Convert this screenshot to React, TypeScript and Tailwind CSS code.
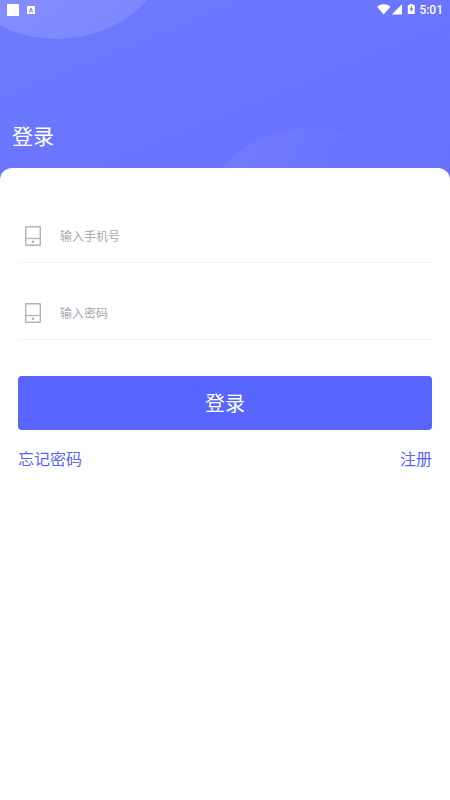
import React from 'react'

function HeaderBackground() {
    return (
        <svg
            className="absolute inset-0 h-full w-full"
            viewBox="0 0 450 184"
            preserveAspectRatio="none"
            aria-hidden="true"
        >
            <defs>
                <linearGradient id="base" x1="0" y1="0" x2="1" y2="1">
                    <stop offset="0" stopColor="#6e7aff" />
                    <stop offset="1" stopColor="#6870ff" />
                </linearGradient>
                <linearGradient id="topCircle" x1="0.2" y1="0.6" x2="0.9" y2="1">
                    <stop offset="0" stopColor="#fff" stopOpacity="0.16" />
                    <stop offset="1" stopColor="#fff" stopOpacity="0.11" />
                </linearGradient>
                <linearGradient id="bottomCircle" x1="0" y1="0.2" x2="0.75" y2="0.35">
                    <stop offset="0" stopColor="#fff" stopOpacity="0.06" />
                    <stop offset="1" stopColor="#fff" stopOpacity="0" />
                </linearGradient>
            </defs>
            <rect width="450" height="184" fill="url(#base)" />
            <circle cx="57" cy="-87" r="126" fill="url(#topCircle)" />
            <circle cx="309" cy="243" r="115" fill="url(#bottomCircle)" />
        </svg>
    )
}

function StatusBar() {
    return (
        <div className="flex h-5 items-center justify-between px-[7px] text-white">
            <div className="flex items-center gap-2">
                <span className="h-3 w-3 bg-white"></span>
                <svg className="h-2 w-2" viewBox="0 0 8 8" aria-hidden="true">
                    <rect width="8" height="8" rx="0.5" fill="#fff" />
                    <path d="M2.3 6.5 4 1.8 5.7 6.5M2.9 5h2.2" fill="none" stroke="#7c86ff" strokeWidth="1" />
                </svg>
            </div>
            <div className="flex items-center gap-0.5">
                <svg className="h-3 w-10" viewBox="0 0 40 12" fill="#fff" aria-hidden="true">
                    <path d="M0 2.8C3.6-.5 9.9-.5 13.5 2.8L6.7 10.4z" />
                    <path d="M25 .2v10.2H14.8z" />
                    <path d="M31.4.9h1.4V0h3v.9h1.4q.6 0 .6.6v7.8q0 .6-.6.6h-5.8q-.6 0-.6-.6V1.5q0-.6.6-.6z" />
                    <path d="M34.9 1.8 32.5 5.6h1.4v2.8l2.3-3.8h-1.3z" fill="#6f7aff" />
                </svg>
                <span className="font-[Roboto,sans-serif] text-xs font-medium leading-5">5:01</span>
            </div>
        </div>
    )
}

function FieldIcon() {
    return (
        <svg className="h-5 w-4 shrink-0" viewBox="0 0 16 20" fill="none" stroke="#b0b3bf" aria-hidden="true">
            <rect x="0.7" y="0.7" width="14.6" height="18.6" rx="0.5" strokeWidth="1.4" />
            <path d="M0.5 12.5h15" strokeWidth="1.3" />
            <circle cx="8" cy="15.8" r="1.3" fill="#b0b3bf" stroke="none" />
        </svg>
    )
}

function Field({ id, type, label }: { id: string; type: string; label: string }) {
    return (
        <div className="flex h-[54px] items-center border-b border-[#f3f3f5] pl-[7px]">
            <label htmlFor={id} aria-label={label}>
                <FieldIcon />
            </label>
            <input
                id={id}
                type={type}
                placeholder={label}
                className="ml-[19px] min-w-0 flex-1 bg-transparent text-xs text-gray-700 outline-none placeholder:text-[#a5a8b2]"
            />
        </div>
    )
}

export default function App() {
    return (
        <div className="min-h-screen bg-white font-['Noto_Sans_CJK_SC',sans-serif]">
            <header className="relative h-[184px]">
                <HeaderBackground />
                <div className="relative">
                    <StatusBar />
                    <h1 className="px-3 pt-[99px] text-[21px] leading-8 text-white">登录</h1>
                </div>
            </header>
            <main className="relative -mt-4 rounded-t-xl bg-white px-[18px] pt-[41px]">
                <form onSubmit={(e) => e.preventDefault()}>
                    <div className="space-y-[23px]">
                        <Field id="phone" type="tel" label="输入手机号" />
                        <Field id="password" type="password" label="输入密码" />
                    </div>
                    <button type="submit" className="mt-9 h-[54px] w-full rounded bg-[#5865ff] text-xl text-white">
                        登录
                    </button>
                </form>
                <div className="mt-4 flex justify-between text-base leading-6 text-[#5865ff]">
                    <a href="#forgot">忘记密码</a>
                    <a href="#register">注册</a>
                </div>
            </main>
        </div>
    )
}
